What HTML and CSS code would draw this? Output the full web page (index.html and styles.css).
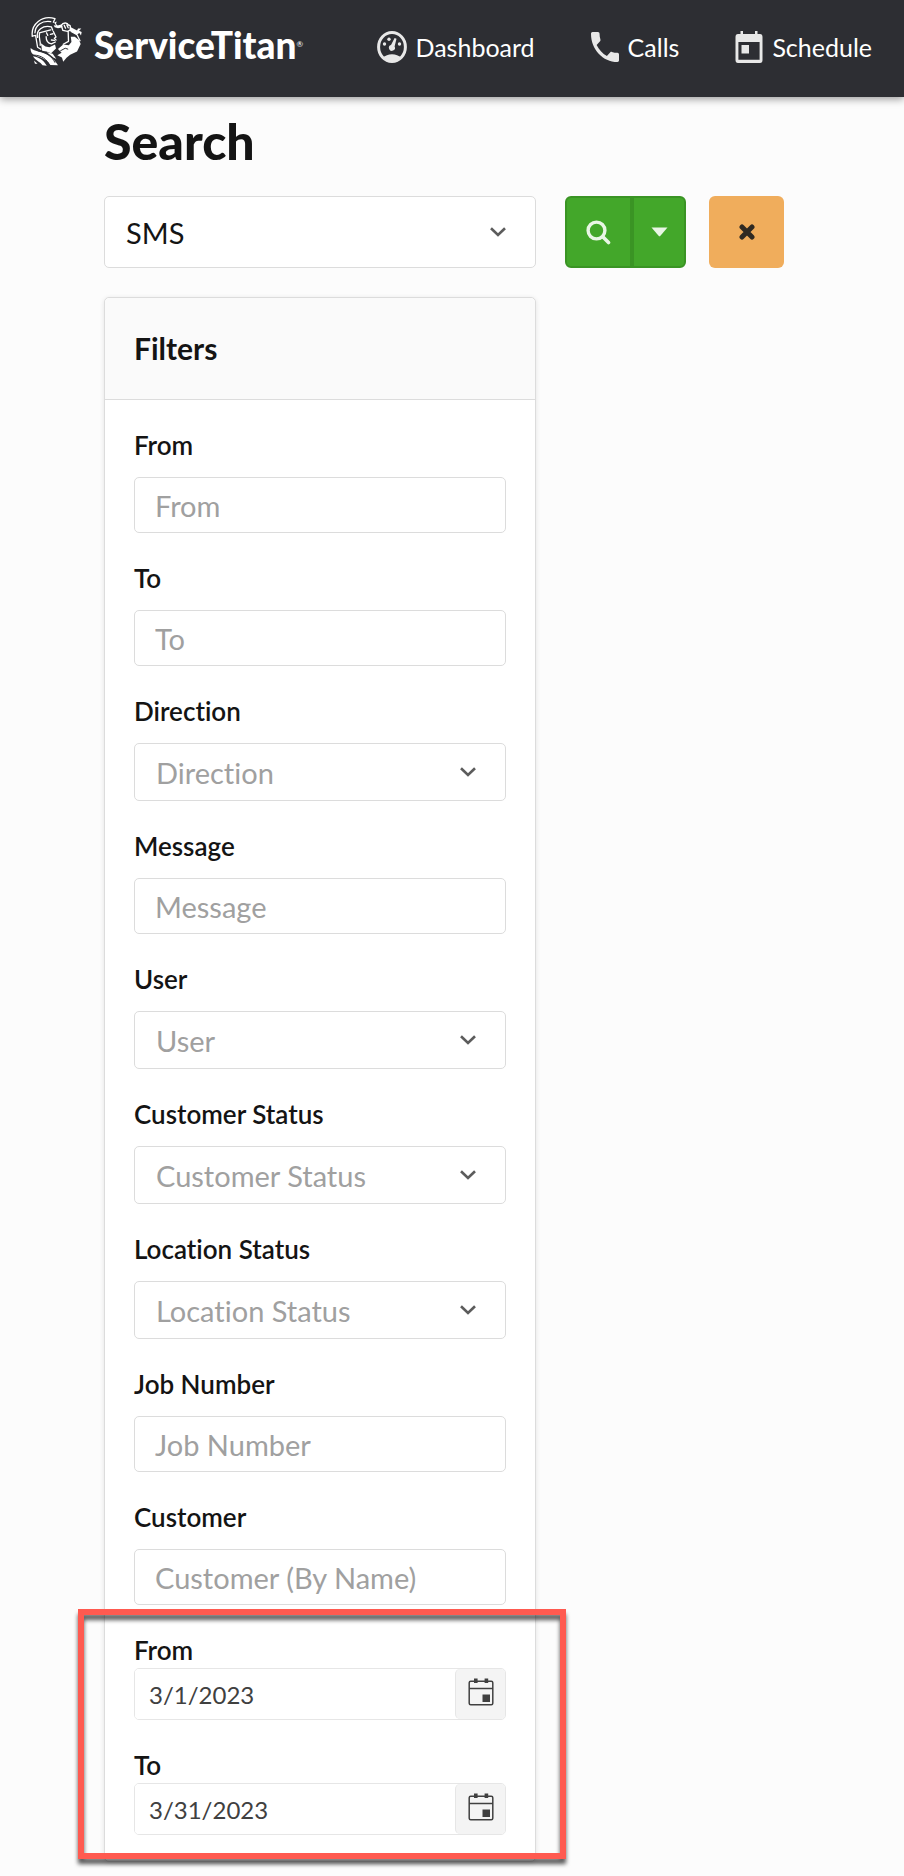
FILE: index.html
```html
<!DOCTYPE html>
<html lang="en">
<head>
  <meta charset="UTF-8">
  <meta name="viewport" content="width=device-width, initial-scale=1">
  <title>Search</title>
  <link rel="stylesheet" href="styles.css">
</head>
<body>
  <!-- Shared icons -->
  <svg class="sprite" aria-hidden="true">
    <symbol id="icon-chevron" viewBox="0 0 16 10">
      <path d="M1 1.2 8 8 15 1.2" fill="none" stroke="currentColor" stroke-width="2.6"/>
    </symbol>
    <symbol id="icon-calendar" viewBox="0 0 26 28">
      <rect x="1.2" y="3.2" width="23.6" height="23.6" rx="1.5" fill="none" stroke="currentColor" stroke-width="1.5"/>
      <path d="M1 10.5h24" stroke="currentColor" stroke-width="1.5"/>
      <path d="M6 .5h3.6v4.6H6zM16.6.5h3.6v4.6h-3.6zM14.5 16.5h7.5V24h-7.5z" fill="currentColor"/>
    </symbol>
  </svg>

  <!-- Top bar -->
  <header class="topbar">
    <a class="logo" href="#">
      <svg class="logo-mark" viewBox="90 45 156 152" aria-hidden="true">
        <g fill="none" stroke="#fff" stroke-width="4" stroke-linecap="round" stroke-linejoin="round">
          <path d="M96 106C91 70 126 41 165 53L160 64"/>
          <path d="M104 96C105 74 124 58 152 62"/>
          <path d="M96 106L106 104L112 140L122 146"/>
          <path d="M112 110C106 88 128 72 154 78L158 88"/>
          <path d="M117 96L152 87M118 98C114 112 122 120 120 134"/>
          <path d="M139 96L143 104M138 108C138 120 144 128 154 130L166 124"/>
          <path d="M160 92L168 109L163 113L168 118"/>
          <path d="M151 101L159 99M154 118L163 119"/>
          <path d="M184 74C189 64 203 64 206 73M184 74L189 89L203 92L213 87L211 74L203 70"/>
          <path d="M193 73L197 82M201 72L205 81"/>
          <path d="M205 92L206 122L190 131"/>
          <path d="M214 92L232 102L241 120"/>
        </g>
        <g fill="#fff">
          <path d="M162 65L170 62L168 69L173 74L186 70L188 79L174 82L164 79L161 73L168 74z"/>
          <path d="M210 78L232 89L235 83L245 83L238 90L246 94L244 104L239 97L231 102L209 89z"/>
          <path d="M122 128L136 138L148 140L165 132L168 144L153 158L139 153L126 151z"/>
          <path d="M174 145L190 132L207 134L215 124L213 108L225 108L238 118L243 130L232 153L211 163L200 172L190 184L186 171L172 164L185 157z"/>
          <path d="M91 142C102 155 129 151 150 168C162 177 168 185 174 195L151 194C138 171 114 170 98 161C92 156 90 149 91 142z"/>
          <path d="M98 167C119 171 131 180 140 196L127 195C119 182 106 181 98 167z"/>
          <path d="M101 180L112 190L104 190z"/>
          <path d="M140 155L158 160L169 176L160 171z"/>
        </g>
        <path d="M113 151C138 153 157 170 165 187M100 164C123 164 142 177 148 196M181 151L196 143L205 146" fill="none" stroke="#2d2e33" stroke-width="3"/>
      </svg>
      <span class="logo-text">ServiceTitan<sup>®</sup></span>
    </a>
    <nav class="nav">
      <a href="#">
        <svg width="30" height="32" viewBox="0 0 30 32" aria-hidden="true">
          <ellipse cx="15" cy="16" rx="13.4" ry="14.4" fill="none" stroke="currentColor" stroke-width="3"/>
          <path d="M6 27C10 22 20 22 24 27L20 30.500H10z" fill="currentColor"/>
          <path d="M17.600 7 19.500 7.800 17.600 15.500A3 3 0 1 1 14 14z" fill="currentColor"/>
          <g fill="currentColor">
            <circle cx="7.500" cy="13" r="1.700"/>
            <circle cx="12" cy="8.300" r="1.700"/>
            <circle cx="22.500" cy="13" r="1.700"/>
          </g>
        </svg>
        <span>Dashboard</span>
      </a>
      <a href="#">
        <svg width="28" height="30" viewBox="3 3 18 18" preserveAspectRatio="none" aria-hidden="true">
          <path d="M6.620 10.790c1.440 2.830 3.760 5.140 6.590 6.590l2.200-2.200c.27-.27.67-.36 1.020-.24 1.120.37 2.330.57 3.570.57.55 0 1 .45 1 1V20c0 .55-.45 1-1 1-9.390 0-17-7.610-17-17 0-.55.45-1 1-1h3.500c.55 0 1 .45 1 1 0 1.250.2 2.450.57 3.570.11.35.03.74-.25 1.020l-2.200 2.200z" fill="currentColor"/>
        </svg>
        <span>Calls</span>
      </a>
      <a href="#">
        <svg width="28" height="32" viewBox="0 0 28 32" aria-hidden="true">
          <path d="M3 3H5.500V0H8V3H20V0H22.500V3H25Q27.500 3 27.500 6V29Q27.500 32 25 32H3Q.5 32 .5 29V6Q.5 3 3 3zM3.400 11V28.800H24.600V11zM6.500 14H14V22.500H6.500z" fill="currentColor" fill-rule="evenodd"/>
        </svg>
        <span>Schedule</span>
      </a>
    </nav>
  </header>

  <main class="page">
    <h1>Search</h1>

    <!-- Search type and actions -->
    <div class="select select-large">
      <select aria-label="Search type">
        <option>SMS</option>
      </select>
      <svg class="chevron" aria-hidden="true"><use href="#icon-chevron"/></svg>
    </div>
    <div class="actions">
      <div class="split-button">
        <button type="submit" form="filters" aria-label="Search">
          <svg width="25" height="25" viewBox="0 0 25 25" aria-hidden="true">
            <circle cx="10.500" cy="10.500" r="8.400" fill="none" stroke="currentColor" stroke-width="3.400"/>
            <path d="M17 17 22.500 22.500" stroke="currentColor" stroke-width="3.600" stroke-linecap="round"/>
          </svg>
        </button>
        <button type="button" aria-label="More search options">
          <svg width="17" height="10" viewBox="0 0 17 10" aria-hidden="true">
            <path d="M.5.5H16.500L9 9.200H8z" fill="currentColor"/>
          </svg>
        </button>
      </div>
      <button type="reset" form="filters" class="clear" aria-label="Clear">
        <svg width="16" height="16" viewBox="0 0 16 16" aria-hidden="true">
          <path d="M3 3 13 13M13 3 3 13" stroke="currentColor" stroke-width="5" stroke-linecap="round"/>
        </svg>
      </button>
    </div>

    <!-- Filters -->
    <form class="filters" id="filters">
      <h2>Filters</h2>
      <div class="fields">
        <div class="field">
          <label for="from">From</label>
          <input id="from" type="text" placeholder="From">
        </div>
        <div class="field">
          <label for="to">To</label>
          <input id="to" type="text" placeholder="To">
        </div>
        <div class="field">
          <label for="direction">Direction</label>
          <div class="select">
            <select id="direction"><option>Direction</option></select>
            <svg class="chevron" aria-hidden="true"><use href="#icon-chevron"/></svg>
          </div>
        </div>
        <div class="field">
          <label for="message">Message</label>
          <input id="message" type="text" placeholder="Message">
        </div>
        <div class="field">
          <label for="user">User</label>
          <div class="select">
            <select id="user"><option>User</option></select>
            <svg class="chevron" aria-hidden="true"><use href="#icon-chevron"/></svg>
          </div>
        </div>
        <div class="field">
          <label for="customer-status">Customer Status</label>
          <div class="select">
            <select id="customer-status"><option>Customer Status</option></select>
            <svg class="chevron" aria-hidden="true"><use href="#icon-chevron"/></svg>
          </div>
        </div>
        <div class="field">
          <label for="location-status">Location Status</label>
          <div class="select">
            <select id="location-status"><option>Location Status</option></select>
            <svg class="chevron" aria-hidden="true"><use href="#icon-chevron"/></svg>
          </div>
        </div>
        <div class="field">
          <label for="job-number">Job Number</label>
          <input id="job-number" type="text" placeholder="Job Number">
        </div>
        <div class="field">
          <label for="customer">Customer</label>
          <input id="customer" type="text" placeholder="Customer (By Name)">
        </div>

        <!-- Date range, outlined in red -->
        <div class="date-range">
          <div class="field date-field">
            <label for="date-from">From</label>
            <div class="date">
              <input id="date-from" type="text" value="3/1/2023">
              <button type="button" aria-label="Pick from date">
                <svg width="26" height="28" aria-hidden="true"><use href="#icon-calendar"/></svg>
              </button>
            </div>
          </div>
          <div class="field date-field">
            <label for="date-to">To</label>
            <div class="date">
              <input id="date-to" type="text" value="3/31/2023">
              <button type="button" aria-label="Pick to date">
                <svg width="26" height="28" aria-hidden="true"><use href="#icon-calendar"/></svg>
              </button>
            </div>
          </div>
        </div>
      </div>
    </form>
  </main>
</body>
</html>
```
FILE: styles.css
```css
* {
  box-sizing: border-box;
}
body {
  margin: 0;
  background: #fcfcfc;
  color: #141414;
  font-family: Lato, "Open Sans", sans-serif;
  font-size: 25px;
  font-variant-ligatures: none;
}
input,
select,
button {
  margin: 0;
  font: inherit;
  font-variant-ligatures: none;
}
button {
  display: flex;
  align-items: center;
  justify-content: center;
  border: 0;
  padding: 0;
  cursor: pointer;
}
.sprite {
  display: none;
}

/* Top bar */
.topbar {
  display: flex;
  align-items: center;
  justify-content: space-between;
  padding: 16px 32px 31px 30px;
  background: #2d2e33;
  box-shadow: 0 2px 8px rgba(0, 0, 0, 0.4);
}
.logo {
  display: flex;
  align-items: center;
  gap: 12px;
  color: #fff;
  text-decoration: none;
}
.logo-mark {
  width: 52px;
  height: 50px;
}
.logo-text {
  padding-top: 8px;
  font-size: 37px;
  font-weight: 900;
  line-height: 42px;
}
.logo-text sup {
  font-size: 8px;
  font-weight: 400;
  vertical-align: 12px;
  line-height: 1;
}
.nav {
  display: flex;
  gap: 56px;
  padding-top: 11px;
}
.nav a {
  display: flex;
  align-items: center;
  gap: 9px;
  color: #fff;
  text-decoration: none;
}
.nav svg {
  color: #e8e8e8;
}

/* Page grid */
.page {
  display: grid;
  grid-template-columns: minmax(0, 1fr) auto;
  column-gap: 29px;
  padding: 17px 120px 8px 104px;
}
h1 {
  grid-column: 1 / -1;
  margin: 0 0 28px;
  font-size: 50px;
  font-weight: 900;
  line-height: 54px;
}

/* Drop-downs */
.select {
  display: grid;
  align-items: center;
}
.select select {
  grid-area: 1 / 1;
  width: 100%;
  height: 58px;
  appearance: none;
  border: 1px solid #dcdcdc;
  border-radius: 5px;
  padding: 0 60px 0 21px;
  background: #fff;
  color: #a0a0a0;
  font-size: 29px;
}
.chevron {
  grid-area: 1 / 1;
  justify-self: end;
  width: 16px;
  height: 10px;
  margin-right: 30px;
  color: #5c5c5c;
  pointer-events: none;
}
.select-large select {
  height: 72px;
  color: #141414;
}

/* Search buttons */
.actions {
  display: flex;
  gap: 23px;
}
.split-button {
  display: flex;
}
.split-button button {
  width: 67px;
  border: 2px solid #3a9424;
  border-radius: 6px 0 0 6px;
  background: #43a72a;
  color: #e9f6e5;
}
.split-button button + button {
  width: 54px;
  border-radius: 0 6px 6px 0;
}
.clear {
  width: 75px;
  border-radius: 6px;
  background: #f0ad5c;
  color: #302a22;
}

/* Filter card */
.filters {
  margin-top: 29px;
  border: 1px solid #dcdcdc;
  border-radius: 5px;
  background: #fff;
  box-shadow: 0 1px 5px rgba(0, 0, 0, 0.1);
}
.filters h2 {
  margin: 0;
  border-bottom: 1px solid #dcdcdc;
  border-radius: 5px 5px 0 0;
  padding: 31px 29px 32px;
  background: #fafafa;
  font-size: 30px;
  font-weight: 700;
  line-height: 38px;
}
.fields {
  display: flex;
  flex-direction: column;
  gap: 30px;
  padding: 30px 29px 26px;
}
.field {
  display: flex;
  flex-direction: column;
  gap: 16px;
}
.field label {
  font-size: 26px;
  font-weight: 600;
  line-height: 31px;
}
.field > input {
  width: 100%;
  height: 56px;
  border: 1px solid #dcdcdc;
  border-radius: 5px;
  padding: 0 20px;
  background: #fff;
  font-size: 29px;
}
.field > input::placeholder {
  color: #a0a0a0;
}

/* Date range */
.date-range {
  display: flex;
  position: relative;
  flex-direction: column;
  gap: 30px;
}
.date-range::after {
  content: "";
  position: absolute;
  inset: -26px -60px -24px -56px;
  border: 6px solid #ff5a50;
  filter: drop-shadow(0 5px 2px rgba(0, 0, 0, 0.65));
  pointer-events: none;
}
.date-field {
  gap: 2px;
}
.date {
  display: flex;
  height: 52px;
  border: 1px solid #e6e6e6;
  border-radius: 5px;
  overflow: hidden;
}
.date input {
  flex: 1;
  min-width: 0;
  border: 0;
  padding: 0 14px;
  background: #fff;
  color: #404040;
  font-size: 24px;
}
.date button {
  width: 50px;
  border-left: 1px solid #e6e6e6;
  border-radius: 5px 0 0 5px;
  padding-bottom: 4px;
  background: #f4f4f4;
  color: #404040;
}
```
